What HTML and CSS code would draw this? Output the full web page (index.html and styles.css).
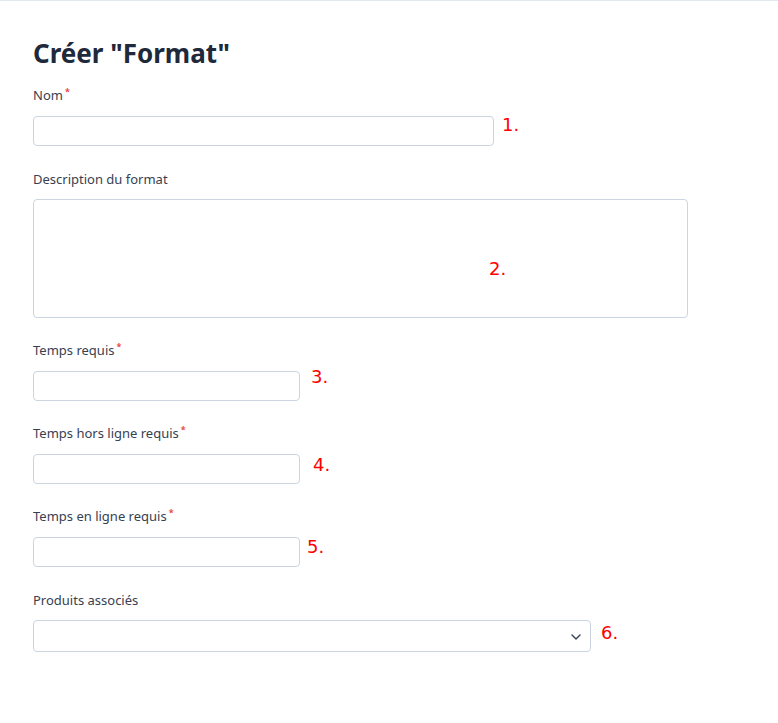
FILE: index.html
```html
<!DOCTYPE html>
<html lang="fr">
<head>
    <meta charset="UTF-8">
    <meta name="viewport" content="width=device-width, initial-scale=1.0">
    <title>Créer "Format"</title>
    <link rel="stylesheet" href="styles.css">
</head>
<body>

<div class="page">
    <h1>Créer "Format"</h1>

    <form class="form">
        <div class="field">
            <label class="label required" for="nom">Nom<span class="star">*</span></label>
            <div class="row">
                <input type="text" id="nom" class="input w-name">
                <span class="mark mark-1">1.</span>
            </div>
        </div>

        <div class="field">
            <label class="label" for="description">Description du format</label>
            <div class="area-wrap">
                <textarea id="description" class="input area"></textarea>
                <span class="mark mark-2">2.</span>
            </div>
        </div>

        <div class="field">
            <label class="label required" for="temps">Temps requis<span class="star">*</span></label>
            <div class="row">
                <input type="text" id="temps" class="input w-short">
                <span class="mark mark-3">3.</span>
            </div>
        </div>

        <div class="field">
            <label class="label required" for="hors-ligne">Temps hors ligne requis<span class="star">*</span></label>
            <div class="row">
                <input type="text" id="hors-ligne" class="input w-short">
                <span class="mark mark-4">4.</span>
            </div>
        </div>

        <div class="field">
            <label class="label required" for="en-ligne">Temps en ligne requis<span class="star">*</span></label>
            <div class="row">
                <input type="text" id="en-ligne" class="input w-short">
                <span class="mark mark-5">5.</span>
            </div>
        </div>

        <div class="field">
            <label class="label" for="produits">Produits associés</label>
            <div class="row">
                <div class="select-wrap">
                    <select id="produits" class="input select">
                        <option value=""></option>
                    </select>
                    <svg class="chevron" width="10" height="6" viewBox="0 0 10 6" fill="none">
                        <path d="M1 1l4 4 4-4" stroke="#334155" stroke-width="1.4" stroke-linecap="round" stroke-linejoin="round"/>
                    </svg>
                </div>
                <span class="mark mark-6">6.</span>
            </div>
        </div>
    </form>
</div>

</body>
</html>
```

FILE: styles.css
```css
body {
    font-family: "Noto Sans", Arial, sans-serif;
    background-color: white;
    color: #374151;
    margin: 0;
}
.page {
    border-top: 1px solid #e2e8f0;
    padding: 36px 33px 40px;
}
h1 {
    font-size: 26px;
    line-height: 32px;
    font-weight: 700;
    color: #1e293b;
    margin: 0 0 17px;
}
.form {
    display: flex;
    flex-direction: column;
    gap: 23px;
}
.label {
    display: block;
    font-size: 13px;
    line-height: 20px;
    margin-bottom: 10px;
}
.label.required {
    line-height: 18px;
    padding-bottom: 2px;
}
.star {
    color: #ef4444;
    font-size: 9px;
    font-weight: 700;
    vertical-align: 5px;
    margin-left: 2px;
    line-height: 0;
}
.row {
    display: flex;
    align-items: flex-start;
}
.input {
    box-sizing: border-box;
    height: 30px;
    border: 1px solid #cbd5e1;
    border-radius: 4px;
    background: white;
    font-family: inherit;
    font-size: 13px;
    padding: 4px 8px;
    margin: 0;
}
.w-name {
    width: 461px;
}
.w-short {
    width: 267px;
}
.area-wrap {
    position: relative;
    width: 655px;
}
.area {
    display: block;
    width: 655px;
    height: 119px;
    resize: none;
}
.select-wrap {
    position: relative;
    width: 558px;
}
.select {
    display: block;
    width: 100%;
    height: 32px;
    appearance: none;
    -webkit-appearance: none;
}
.chevron {
    position: absolute;
    right: 10px;
    top: 14px;
}
.mark {
    font-family: "DejaVu Sans", sans-serif;
    font-size: 18px;
    line-height: 22px;
    color: #ff0000;
}
.mark-1 { margin: -2px 0 0 8px; }
.mark-2 {
    position: absolute;
    left: 456px;
    top: 59px;
}
.mark-3 { margin: -5px 0 0 11px; }
.mark-4 { margin: 0 0 0 13px; }
.mark-5 { margin: -1px 0 0 7px; }
.mark-6 { margin: 2px 0 0 10px; }
```
